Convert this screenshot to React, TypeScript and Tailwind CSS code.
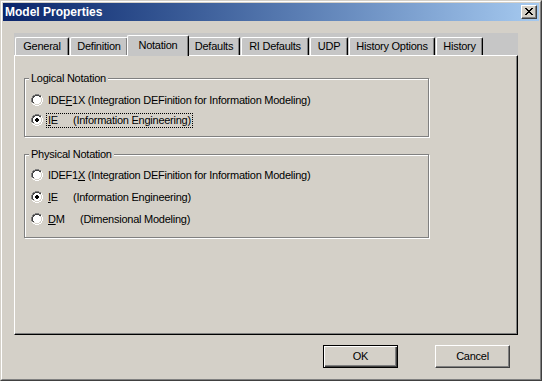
import React from "react";

const G = "#808080";
const D = "#404040";
const W = "#ffffff";
const L = "#d4d0c8";

const RADIO = [
  "....gggg....",
  "..ggddddgg..",
  ".gddwwwwddw.",
  ".gdwwwwwwlw.",
  "gdwwwwwwwwlw",
  "gdwwwwwwwwlw",
  "gdwwwwwwwwlw",
  "gdwwwwwwwwlw",
  ".gdwwwwwwlw.",
  ".wllwwwwllw.",
  "..wwllllww..",
  "....wwww....",
];

const DOT = [".xx.", "xxxx", "xxxx", ".xx."];

const CLOSE = [
  "xx....xx",
  ".xx..xx.",
  "..xxxx..",
  "...xx...",
  "..xxxx..",
  ".xx..xx.",
  "xx....xx",
];

function Radio({ checked }: { checked?: boolean }) {
  const rects: React.ReactElement[] = [];
  RADIO.forEach((row, y) =>
    row.split("").forEach((c, x) => {
      const col = c === "g" ? G : c === "d" ? D : c === "w" ? W : c === "l" ? L : null;
      if (col) rects.push(<rect key={`r${x}-${y}`} x={x} y={y} width={1} height={1} fill={col} />);
    })
  );
  if (checked) {
    DOT.forEach((row, y) =>
      row.split("").forEach((c, x) => {
        if (c === "x") rects.push(<rect key={`d${x}-${y}`} x={x + 4} y={y + 4} width={1} height={1} fill="#000" />);
      })
    );
  }
  return (
    <svg width="12" height="12" viewBox="0 0 12 12" shapeRendering="crispEdges" className="shrink-0">
      {rects}
    </svg>
  );
}

function CloseGlyph() {
  const rects: React.ReactElement[] = [];
  CLOSE.forEach((row, y) =>
    row.split("").forEach((c, x) => {
      if (c === "x") rects.push(<rect key={`${x}-${y}`} x={x} y={y} width={1} height={1} fill="#000" />);
    })
  );
  return (
    <svg width="8" height="7" viewBox="0 0 8 7" shapeRendering="crispEdges">
      {rects}
    </svg>
  );
}

const tabs: { label: string; w: string; selected?: boolean }[] = [
  { label: "General", w: "w-[55px]" },
  { label: "Definition", w: "w-[59px]" },
  { label: "Notation", w: "w-[59px]", selected: true },
  { label: "Defaults", w: "w-[53px]" },
  { label: "RI Defaults", w: "w-[69px]" },
  { label: "UDP", w: "w-[39px]" },
  { label: "History Options", w: "w-[87px]" },
  { label: "History", w: "w-[48px]" },
];

function Tab({ label, w, selected }: { label: string; w: string; selected?: boolean }) {
  return (
    <div className={`${w} shrink-0 flex items-end pr-[1px]`}>
      {selected ? (
        <div className="relative z-10 -mx-[2px] mb-[-1px] h-[21px] flex-1 flex items-center justify-center pb-[1px] bg-[#c6c6c6] border-l border-t border-r border-l-white border-t-white border-r-black rounded-t-[2px] shadow-[inset_-1px_0_0_#808080]">
          {label}
        </div>
      ) : (
        <div className="h-[18px] flex-1 flex items-center justify-center bg-[#c6c6c6] border-l border-t border-r border-l-white border-t-white border-r-black rounded-t-[2px] shadow-[inset_-1px_0_0_#808080]">
          {label}
        </div>
      )}
    </div>
  );
}

function Label({ children, focus }: { children: React.ReactNode; focus?: boolean }) {
  return (
    <span
      className={`flex items-center h-[15px] px-[1px] border ${
        focus ? "border-dotted border-black" : "border-transparent"
      }`}
    >
      <span className="whitespace-pre">{children}</span>
    </span>
  );
}

function Row({ h, checked, focus, children }: { h: string; checked?: boolean; focus?: boolean; children: React.ReactNode }) {
  return (
    <div className={`flex items-center ${h} gap-[3px] pl-[2px]`}>
      <Radio checked={checked} />
      <Label focus={focus}>{children}</Label>
    </div>
  );
}

export default function App() {
  return (
    <div className="w-[542px] h-[381px] bg-[#d4d0c8] border border-t-[#d4d0c8] border-l-[#d4d0c8] border-r-[#404040] border-b-[#404040] font-['Liberation_Sans','Arial',sans-serif] text-[11px] leading-[13px] tracking-[-0.25px] text-black select-none">
      <div className="h-full flex flex-col border border-t-white border-l-white border-r-[#808080] border-b-[#808080] p-[1px]">
        {/* Title bar */}
        <div className="h-[18px] shrink-0 flex items-center justify-between bg-gradient-to-r from-[#0a246a] to-[#a6caf0] pl-[2px] pr-[2px]">
          <span className="text-white font-bold text-[12px] tracking-normal">Model Properties</span>
          <div className="w-[16px] h-[14px] flex items-center justify-center bg-[#d4d0c8] border border-t-white border-l-white border-r-[#404040] border-b-[#404040] shadow-[inset_-1px_-1px_0_#808080] pb-[1px]">
            <CloseGlyph />
          </div>
        </div>

        {/* Body */}
        <div className="flex flex-col px-[11px] pt-[12px]">
          {/* Tab control */}
          <div className="w-[504px] h-[302px] flex flex-col">
            <div className="h-[22px] shrink-0 flex items-end pl-[1px] bg-[#c6c6c6]">
              {tabs.map((t) => (
                <Tab key={t.label} {...t} />
              ))}
            </div>
            <div className="flex-1 flex flex-col bg-[#d4d0c8] border border-t-white border-l-white border-r-black border-b-black shadow-[inset_-1px_-1px_0_#808080] pl-[9px] pt-[16px]">
              <fieldset className="w-[405px] border border-[#808080] shadow-[inset_1px_1px_0_#fff,1px_1px_0_#fff] pl-[4px] pb-[6px]">
                <legend className="px-[2px] bg-[#d4d0c8]">Logical Notation</legend>
                <div className="flex flex-col pt-[5px]">
                  <Row h="h-[20px]">
                    IDE<u>F</u>1X (Integration DEFinition for Information Modeling)
                  </Row>
                  <Row h="h-[20px]" checked focus>
                    <span className="inline-block w-[25px]">
                      <u>I</u>E
                    </span>
                    (Information Engineering)
                  </Row>
                </div>
              </fieldset>

              <fieldset className="mt-[11px] w-[405px] border border-[#808080] shadow-[inset_1px_1px_0_#fff,1px_1px_0_#fff] pl-[4px] pb-[7px]">
                <legend className="px-[2px] bg-[#d4d0c8]">Physical Notation</legend>
                <div className="flex flex-col pt-[3px]">
                  <Row h="h-[22px]">
                    IDEF1<u>X</u>{" (Integration DEFinition for Information Modeling)"}
                  </Row>
                  <Row h="h-[22px]" checked>
                    <span className="inline-block w-[25px]">
                      <u>I</u>E
                    </span>
                    (Information Engineering)
                  </Row>
                  <Row h="h-[22px]">
                    <span className="inline-block w-[32px]">
                      <u>D</u>M
                    </span>
                    (Dimensional Modeling)
                  </Row>
                </div>
              </fieldset>
            </div>
          </div>
        </div>

        {/* Buttons */}
        <div className="flex mt-[10px] pl-[320px] gap-[37px]">
          <button className="w-[75px] h-[23px] flex items-center justify-center bg-[#d4d0c8] border border-black shadow-[inset_1px_1px_0_#fff,inset_-1px_-1px_0_#404040,inset_-2px_-2px_0_#808080]">
            OK
          </button>
          <button className="w-[75px] h-[23px] flex items-center justify-center bg-[#d4d0c8] border border-t-white border-l-white border-r-[#404040] border-b-[#404040] shadow-[inset_-1px_-1px_0_#808080]">
            Cancel
          </button>
        </div>
      </div>
    </div>
  );
}
